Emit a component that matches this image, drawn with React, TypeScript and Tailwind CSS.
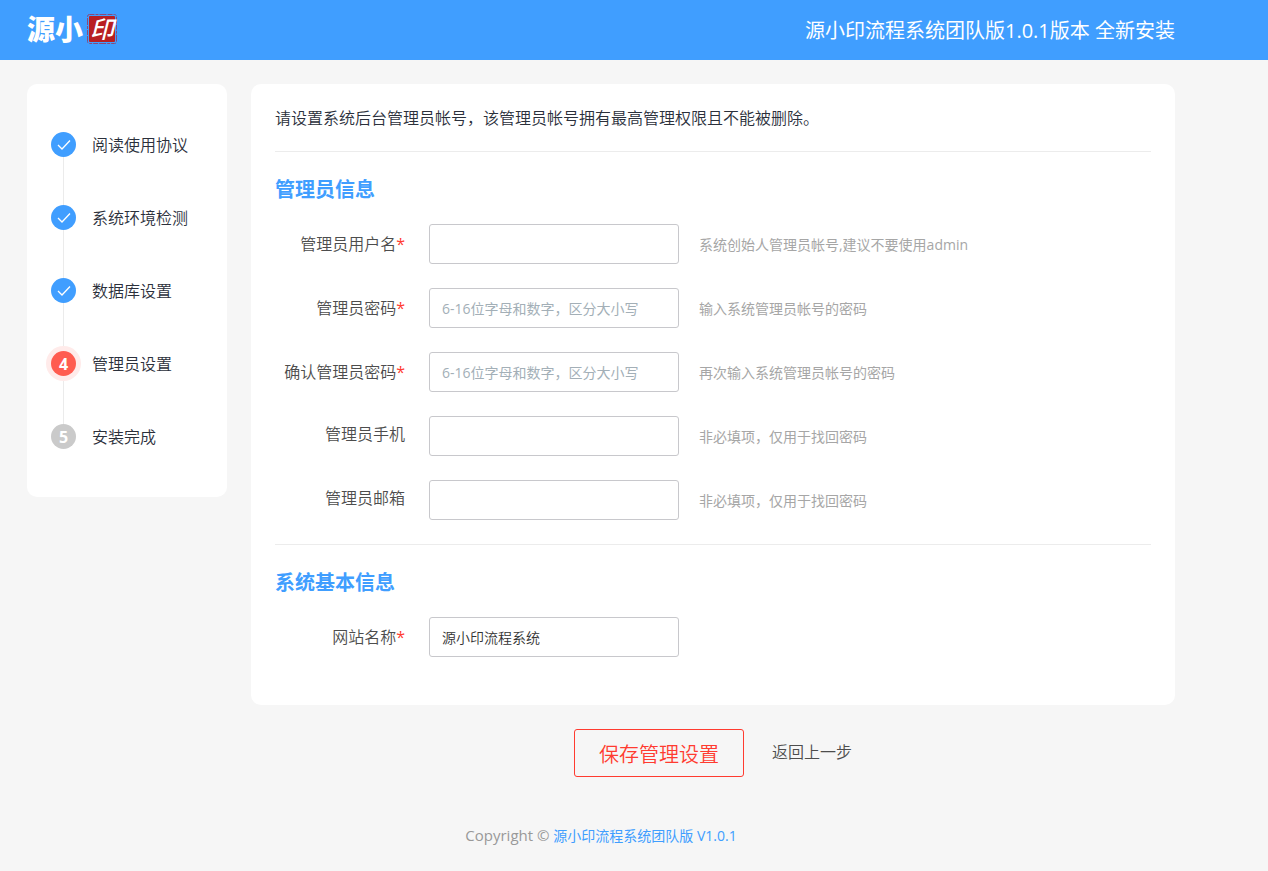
import { useState, type FormEvent } from 'react';

interface Step {
  label: string;
  status: 'done' | 'active' | 'pending';
}

interface Field {
  name: string;
  label: string;
  type: string;
  required?: boolean;
  placeholder?: string;
  hint?: string;
}

const steps: Step[] = [
  { label: '阅读使用协议', status: 'done' },
  { label: '系统环境检测', status: 'done' },
  { label: '数据库设置', status: 'done' },
  { label: '管理员设置', status: 'active' },
  { label: '安装完成', status: 'pending' },
];

const adminFields: Field[] = [
  { name: 'username', label: '管理员用户名', type: 'text', required: true, hint: '系统创始人管理员帐号,建议不要使用admin' },
  { name: 'password', label: '管理员密码', type: 'password', required: true, placeholder: '6-16位字母和数字，区分大小写', hint: '输入系统管理员帐号的密码' },
  { name: 'confirm', label: '确认管理员密码', type: 'password', required: true, placeholder: '6-16位字母和数字，区分大小写', hint: '再次输入系统管理员帐号的密码' },
  { name: 'mobile', label: '管理员手机', type: 'tel', hint: '非必填项，仅用于找回密码' },
  { name: 'email', label: '管理员邮箱', type: 'email', hint: '非必填项，仅用于找回密码' },
];

const siteFields: Field[] = [{ name: 'siteName', label: '网站名称', type: 'text', required: true }];

const badgeStyles = {
  done: 'bg-[#409eff]',
  active: 'bg-[#ff5c50] ring-5 ring-[#ffebea]',
  pending: 'bg-[#cacaca]',
};

function Logo() {
  return (
    <a href="#" className="flex items-center pb-0.5 text-white">
      <span className="text-[28px] leading-7 font-black">源小</span>
      <span className="relative ml-1 flex h-[30px] w-[30px] items-center justify-center">
        <svg className="absolute inset-0" width="30" height="30" viewBox="0 0 30 30" aria-hidden="true">
          <rect x="0.5" y="0.5" width="29" height="29" rx="2" fill="none" stroke="#8a4a78" strokeDasharray="5 1 3 1 7 1" />
          <rect x="2" y="2" width="26" height="26" rx="1" fill="#b81f22" />
        </svg>
        <span className="relative text-2xl leading-7 font-medium italic">印</span>
      </span>
    </a>
  );
}

function StepList() {
  return (
    <ol className="w-[200px] shrink-0 rounded-[10px] bg-white px-6 py-12">
      {steps.map((step, i) => (
        <li key={step.label} className="flex gap-4">
          <div className="flex w-[25px] flex-col items-center">
            <span
              className={`z-10 flex h-[25px] w-[25px] items-center justify-center rounded-full text-base font-bold text-white ${badgeStyles[step.status]}`}
            >
              {step.status === 'done' ? (
                <svg width="25" height="25" viewBox="0 0 25 25" fill="none" aria-hidden="true">
                  <path d="M7 13l4 4 8-8.5" stroke="currentColor" strokeWidth="1.3" />
                </svg>
              ) : (
                i + 1
              )}
            </span>
            {i < steps.length - 1 && <span className="h-12 w-px bg-[#ebebeb]" />}
          </div>
          <span className="h-[25px] leading-[26px] text-[#2b303b]">{step.label}</span>
        </li>
      ))}
    </ol>
  );
}

interface FieldRowProps {
  field: Field;
  value: string;
  onChange: (name: string, value: string) => void;
}

function FieldRow({ field, value, onChange }: FieldRowProps) {
  return (
    <div className="flex items-center">
      <label
        htmlFor={field.name}
        className={`w-[130px] shrink-0 text-right leading-5 text-[#4d4d4d] ${field.required ? '' : 'pb-1'}`}
      >
        {field.label}
        {field.required && <span className="font-normal text-[#ff3b30]">*</span>}
      </label>
      <input
        id={field.name}
        name={field.name}
        type={field.type}
        placeholder={field.placeholder}
        value={value}
        onChange={(e) => onChange(field.name, e.target.value)}
        className="ml-6 h-10 w-[250px] rounded-[3px] border border-[#c8c8cc] bg-white px-3 text-sm text-[#333333] outline-none placeholder:font-normal placeholder:text-[#a3afb7] focus:border-[#409eff]"
      />
      {field.hint && <span className="ml-5 pt-0.5 text-sm font-normal text-[#a6a6a6]">{field.hint}</span>}
    </div>
  );
}

export default function App() {
  const [values, setValues] = useState<Record<string, string>>({ siteName: '源小印流程系统' });

  const handleChange = (name: string, value: string) => {
    setValues((v) => ({ ...v, [name]: value }));
  };

  const handleSubmit = (e: FormEvent) => {
    e.preventDefault();
  };

  return (
    <div className="min-h-screen bg-[#f6f6f6] font-['Open_Sans','Noto_Sans_CJK_SC',sans-serif] text-base font-[350]">
      <header className="flex h-15 items-center justify-between bg-[#409eff] pr-[93px] pl-[27px]">
        <Logo />
        <h1 className="pt-0.5 text-xl font-normal text-white">源小印流程系统团队版1.0.1版本 全新安装</h1>
      </header>

      <div className="pr-[93px] pl-[27px]">
        <div className="flex items-start gap-6 pt-6">
          <StepList />

          <form onSubmit={handleSubmit} className="min-w-0 flex-1">
            <div className="rounded-[10px] bg-white px-6 pt-6 pb-12">
              <p className="h-11 border-b border-[#ececec] leading-5 text-[#2b303b]">
                请设置系统后台管理员帐号，该管理员帐号拥有最高管理权限且不能被删除。
              </p>

              <section className="py-6">
                <h2 className="mb-5 text-xl leading-7 font-bold text-[#409eff]">管理员信息</h2>
                <div className="flex flex-col gap-6">
                  {adminFields.map((f) => (
                    <FieldRow key={f.name} field={f} value={values[f.name] ?? ''} onChange={handleChange} />
                  ))}
                </div>
              </section>

              <section className="border-t border-[#ececec] pt-6">
                <h2 className="mb-5 text-xl leading-7 font-bold text-[#409eff]">系统基本信息</h2>
                {siteFields.map((f) => (
                  <FieldRow key={f.name} field={f} value={values[f.name] ?? ''} onChange={handleChange} />
                ))}
              </section>
            </div>

            <div className="mt-6 flex items-center justify-center gap-7">
              <button type="submit" className="h-12 w-[170px] rounded-[3px] border border-[#ff3b30] pt-1 text-xl text-[#ff3b30]">
                保存管理设置
              </button>
              <a href="#" className="pb-0.5 text-[#4d4d4d]">返回上一步</a>
            </div>
          </form>
        </div>

        <footer className="pt-12 pb-6 text-center text-[15px] leading-5 font-normal text-[#999999]">
          Copyright © <a href="#" className="text-sm leading-5 text-[#409eff]">源小印流程系统团队版 V1.0.1</a>
        </footer>
      </div>
    </div>
  );
}
